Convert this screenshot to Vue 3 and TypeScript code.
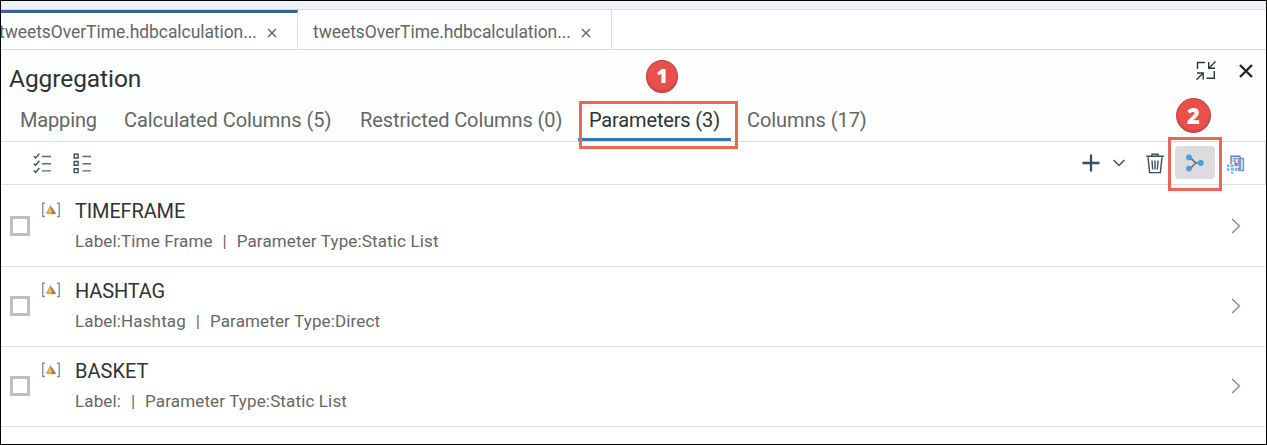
<script setup lang="ts">
interface Tab { text: string; cls: string; active?: boolean }
interface Param { name: string; label: string; type: string; cls: string }

const files: Tab[] = [
  { text: 'tweetsOverTime.hdbcalculation...', cls: 'first', active: true },
  { text: 'tweetsOverTime.hdbcalculation...', cls: 'second' },
]
const sections: Tab[] = [
  { text: 'Mapping', cls: 'mapping' },
  { text: 'Calculated Columns (5)', cls: 'calculated' },
  { text: 'Restricted Columns (0)', cls: 'restricted' },
  { text: 'Parameters (3)', cls: 'parameters', active: true },
  { text: 'Columns (17)', cls: 'columns' },
]
const params: Param[] = [
  { name: 'TIMEFRAME', label: 'Label:Time Frame', type: 'Parameter Type:Static List', cls: 'timeframe' },
  { name: 'HASHTAG', label: 'Label:Hashtag', type: 'Parameter Type:Direct', cls: 'hashtag' },
  { name: 'BASKET', label: 'Label:', type: 'Parameter Type:Static List', cls: 'basket' },
]
</script>

<template>
  <div class="frame">
    <div class="strip"></div>
    <div class="files">
      <div v-for="f in files" :key="f.cls" class="file" :class="[f.cls, { active: f.active }]">
        <span class="file-name">{{ f.text }}</span>
        <svg class="file-close" width="10" height="10" viewBox="0 0 10 10"><path d="M1 1L9 9M9 1L1 9" /></svg>
      </div>
    </div>

    <header class="head">
      <div class="title-row">
        <h1>Aggregation</h1>
        <svg class="collapse" width="22" height="22" viewBox="0 0 22 22">
          <path d="M2.5 9V2.5H10M20.5 1.5L14 8M13.7 2V8.2H20M19.3 11V18.3H11.5M1.5 19.8L8 13.3M2 13H8.2V19.5" />
        </svg>
        <svg class="close" width="14" height="14" viewBox="0 0 14 14"><path d="M1 1L13 13M13 1L1 13" /></svg>
      </div>
      <nav class="sections">
        <span v-for="s in sections" :key="s.cls" class="section" :class="[s.cls, { active: s.active }]">{{ s.text }}</span>
      </nav>
    </header>

    <div class="toolbar">
      <svg class="ic-checks" width="19" height="22" viewBox="0 0 19 22">
        <path d="M.8 4.2L2.6 6L6.4 1.6M.8 11.4L2.6 13.2L6.4 8.8M.8 18.6L2.6 20.4L6.4 16" />
        <path class="bar" d="M9 4.5H18M9 11.7H18M9 18.9H18" />
      </svg>
      <svg class="ic-boxes" width="19" height="22" viewBox="0 0 19 22">
        <path d="M1.2 2.2H5.1V6H1.2ZM1.2 9.5H5.1V13.3H1.2ZM1.2 16.8H5.1V20.6H1.2Z" />
        <path class="bar" d="M9.5 4.5H18M9.5 11.7H18M9.5 18.9H18" />
      </svg>
      <span class="spacer"></span>
      <svg class="ic-plus" width="18" height="18" viewBox="0 0 18 18"><path d="M9 .5V17.5M.5 9H17.5" /></svg>
      <svg class="ic-down" width="12" height="8" viewBox="0 0 12 8"><path d="M.6 1L6 6.4L11.4 1" /></svg>
      <svg class="ic-trash" width="18" height="21" viewBox="0 0 18 21">
        <path d="M.3 3.3H17.7M6 3V1.2H12V3M2 4.2L3.6 19.6H14.4L16 4.2M6 7.5L6.7 16.5M9 7.5V16.5M12 7.5L11.3 16.5" />
      </svg>
      <button class="merge">
        <svg width="20" height="18" viewBox="0 0 20 18">
          <path d="M4 3.4C8 3.6 8 9 12 9H15M4 14.6C8 14.4 8 9 12 9" />
          <circle cx="4" cy="3.4" r="2.9" /><circle cx="4" cy="14.6" r="2.9" /><circle cx="15.8" cy="9" r="2.9" />
        </svg>
      </button>
      <svg class="ic-docs" width="19" height="19" viewBox="0 0 19 19">
        <path class="back" d="M8 3.5H17.5V15.5H8Z" />
        <path class="front" d="M5 1.2H14V13.5H5Z" />
        <path class="lines" d="M6.5 3.6H12.4V10.5H9V3.6M6.5 6H9" />
        <circle class="red" cx="10.3" cy="8.8" r="1.2" />
        <path class="halo" d="M0 9H8V12.5H12V19H0Z" />
        <path class="dots" d="M.8 9.5H3.4V11.9H.8ZM5 9.5H7.6V11.9H5ZM.8 13.3H3.4V15.7H.8ZM5 13.3H7.6V15.7H5ZM9 13.3H11.4V15.7H9ZM5 17H7.4V18.8H5Z" />
      </svg>
    </div>

    <main>
      <div v-for="p in params" :key="p.name" class="row" :class="p.cls">
        <span class="check"></span>
        <svg class="ic-param" width="20" height="16" viewBox="0 0 20 16">
          <path class="bracket" d="M4 1.2H1.7V14.5H4M16 1.2H18.3V14.5H16" />
          <path class="tri" d="M9.4 3.2L15 11.4L11.5 12.5L4.6 11.5Z" />
          <path class="shade" d="M9.4 3.2L11.5 12.5L15 11.4Z" />
          <path class="shine" d="M9 6.5L10.4 10.4L7.3 10Z" />
        </svg>
        <div class="text">
          <div class="name">{{ p.name }}</div>
          <div class="detail"><span class="label">{{ p.label }}</span><span class="pipe">|</span><span class="type">{{ p.type }}</span></div>
        </div>
        <svg class="ic-next" width="10" height="16" viewBox="0 0 10 16"><path d="M1.2 1L8.4 8L1.2 15" /></svg>
      </div>
    </main>

    <div class="mark mark-params"></div>
    <div class="mark mark-merge"></div>
    <div class="badge one"><span>1</span></div>
    <div class="badge two"><span>2</span></div>
  </div>
</template>

<style>
body { margin: 0; background: #fff; }
</style>

<style scoped>
* { box-sizing: border-box; }
.frame { position: relative; width: 1267px; height: 445px; border: 1px solid #000; background: #fff; overflow: hidden; font-family: Roboto, "Liberation Sans", sans-serif; color: #666; }
svg { display: block; flex: none; fill: none; }
.strip { height: 9px; background: #eff1f9; border-bottom: 1px solid #d5dadc; }
.files { display: flex; height: 40px; border-bottom: 1px solid #d9dcdc; }
.file { display: flex; align-items: center; border-right: 1px solid #d9dcdc; white-space: nowrap; }
.file.first { width: 297px; border-top: 3px solid #40618c; }
.file.second { width: 314px; padding-left: 15px; padding-top: 3px; }
.file-name { width: 258px; padding-top: 1px; font-size: 17.5px; line-height: 20px; letter-spacing: -.07px; }
.first .file-name { margin-left: -2px; }
.file-close { margin: 3px 0 0 10px; stroke: #5e6265; stroke-width: 1.4; }
.head { height: 92px; border-bottom: 1px solid #dcdede; background: #fdfefe; }
.title-row { display: flex; height: 52px; padding: 0 13px 0 8px; }
h1 { margin: 13px 0 0; flex: 1; font-size: 24.5px; line-height: 32px; font-weight: 400; letter-spacing: -.08px; color: #2f3232; }
.collapse { margin: 10px 22px 0 0; stroke: #32363a; stroke-width: 1.4; }
.close { margin-top: 14px; stroke: #24282b; stroke-width: 2.4; }
.sections { display: flex; height: 39px; padding-left: 19px; white-space: nowrap; }
.section { height: 39px; font-size: 20px; line-height: 37px; letter-spacing: -.06px; }
.mapping { width: 104px; letter-spacing: -.15px; }
.calculated { width: 236px; }
.restricted { width: 219px; letter-spacing: -.1px; }
.parameters { width: 153px; margin-left: -1px; padding-left: 11px; border-bottom: 3px solid #3478bd; margin-right: 16px; letter-spacing: -.15px; color: #303333; }
.toolbar { display: flex; height: 43px; align-items: center; border-bottom: 1px solid #dedede; border-right: 1px solid #dedede; padding: 0 20px 0 32px; }
.toolbar svg { stroke: #3b4d61; stroke-width: 1.4; }
.ic-boxes { margin-left: 21px; }
.spacer { flex: 1; }
.toolbar .ic-plus { stroke-width: 2.3; }
.ic-down { margin-left: 13px; }
.ic-trash { margin-left: 21px; }
.toolbar .bar { stroke: #5d6b7b; }
.merge { display: flex; align-items: center; justify-content: center; width: 40px; height: 33px; margin: -1px 0 0 11px; padding: 0; border: 0; border-radius: 4px; background: #dcdcdc; }
.merge circle { fill: #479fdd; stroke: none; }
.merge path { stroke: #68717a; stroke-width: 1.7; }
.ic-docs { margin: 3px 0 0 11px; }
.ic-docs .back { stroke: #7c98c5; fill: #d4def0; }
.ic-docs .front { stroke: #5f80b8; fill: #eaf0fa; }
.ic-docs .lines { stroke: #6f8cbd; stroke-width: 1; }
.ic-docs .red { fill: #c94e60; stroke: none; }
.ic-docs .halo { fill: #fff; fill-opacity: .75; stroke: none; }
.ic-docs .dots { fill: #6fb0e4; stroke: none; }
.row { display: flex; height: 80px; border-bottom: 1px solid #dedede; padding-left: 9px; }
.timeframe { height: 82px; padding-top: 2px; }
.check { width: 20px; height: 20px; margin-top: 29px; border: 3px solid #bfbfbf; background: #fff; }
.ic-param { margin: 15px 0 0 10.5px; }
.bracket { stroke: #8795aa; stroke-width: 1.5; }
.tri { fill: #d2a650; }
.shade { fill: #a88048; }
.shine { fill: #edcc77; }
.text { flex: 1; margin-left: 14.5px; white-space: nowrap; }
.name { margin-top: 11px; height: 27px; font-size: 20px; line-height: 26px; letter-spacing: -.15px; color: #303333; }
.basket .name { letter-spacing: 0; }
.detail { display: flex; margin-top: 6px; font-size: 17px; line-height: 20px; letter-spacing: .14px; }
.pipe { width: 24px; text-align: center; }
.ic-next { margin: 31px 25px 0 0; stroke: #8c8c8c; stroke-width: 1.5; }
.mark { position: absolute; border: 3px solid #ec6655; }
.mark-params { left: 578px; top: 100px; width: 159px; height: 48px; }
.mark-merge { left: 1167px; top: 136px; width: 54px; height: 54px; }
.badge { position: absolute; display: flex; justify-content: center; border-radius: 50%; background: #e9504a; border: 1px solid #b9434a; color: #fff; font: 800 20px/30px "Open Sans", sans-serif; box-shadow: inset 0 -2px 1px #d0454a; }
.one { left: 645px; top: 59px; width: 32px; height: 33px; }
.two { left: 1175px; top: 97px; width: 35px; height: 35px; font-size: 22px; line-height: 33px; }
</style>
